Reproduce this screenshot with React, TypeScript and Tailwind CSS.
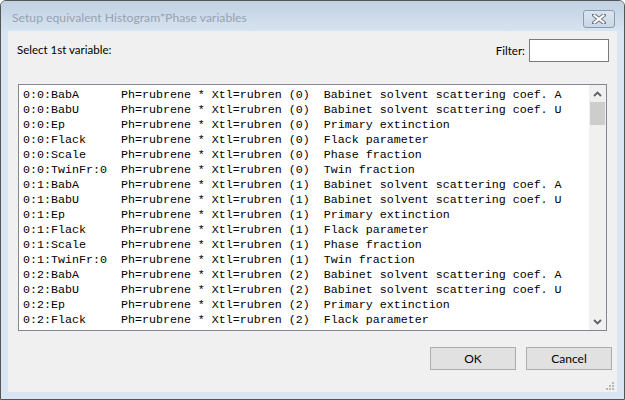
const phases = ['0', '1', '2'];

const params: [string, string][] = [
  ['BabA', 'Babinet solvent scattering coef. A'],
  ['BabU', 'Babinet solvent scattering coef. U'],
  ['Ep', 'Primary extinction'],
  ['Flack', 'Flack parameter'],
  ['Scale', 'Phase fraction'],
  ['TwinFr:0', 'Twin fraction'],
];

const rows = phases
  .flatMap((p) =>
    params.map(([name, desc]) => ({
      name: `0:${p}:${name}`,
      hap: `Ph=rubrene * Xtl=rubren (${p})`,
      desc,
    }))
  )
  .slice(0, 16);

function CloseGlyph() {
  return (
    <svg width="14" height="10" viewBox="0 0 14 10">
      <path d="M2 1 L12 9 M12 1 L2 9" stroke="#6f7784" strokeWidth="4" strokeLinecap="square" />
      <path d="M2.5 1.5 L11.5 8.5 M11.5 1.5 L2.5 8.5" stroke="#ffffff" strokeWidth="2" strokeLinecap="square" />
    </svg>
  );
}

function Chevron({ up }: { up?: boolean }) {
  return (
    <svg width="9" height="6" viewBox="0 0 9 6">
      <path
        d={up ? 'M1 5 L4.5 1.5 L8 5' : 'M1 1 L4.5 4.5 L8 1'}
        fill="none"
        stroke="#606060"
        strokeWidth="1.8"
      />
    </svg>
  );
}

function Grip() {
  const dots = [
    [6, 0],
    [3, 3],
    [6, 3],
    [0, 6],
    [3, 6],
    [6, 6],
  ];
  return (
    <svg width="8" height="8" viewBox="0 0 8 8">
      {dots.map(([x, y]) => (
        <rect key={`${x}-${y}`} x={x} y={y} width="2" height="2" fill="#b8b8b8" />
      ))}
    </svg>
  );
}

export default function App() {
  return (
    <div className="w-[625px] h-[400px] bg-white">
      <div className="w-[625px] h-[400px] flex flex-col border border-[#555555] rounded-t-[6px] bg-[#d9e5f2] overflow-hidden">
        {/* title bar */}
        <div className="h-[30px] shrink-0 flex items-start justify-between pl-[11px] pr-[9px] bg-gradient-to-b from-[#c0d1e3] to-[#d7e4f1]">
          <span className="mt-[11px] text-[12.2px] text-[#98a2ad] font-['Lato',sans-serif] leading-none">
            Setup equivalent Histogram*Phase variables
          </span>
          <div className="w-[32px] h-[18px] mt-[9px] flex items-center justify-center rounded-[3px] border border-[#8d9aae] bg-gradient-to-b from-[#dbe5f0] to-[#c9d7e6]">
            <CloseGlyph />
          </div>
        </div>

        {/* client */}
        <div className="mx-[7px] w-[609px] h-[361px] flex flex-col bg-[#f0f0f0] font-['Lato',sans-serif] text-[11.5px] text-black">
          <div className="flex items-start justify-between pl-[9px] pr-[8px] pt-[8px]">
            <span className="mt-[3px] leading-[16px]">Select 1st variable:</span>
            <div className="flex items-center gap-[4px]">
              <span className="leading-[16px]">Filter:</span>
              <div className="w-[80px] h-[23px] bg-white border border-[#7a7a7a]" />
            </div>
          </div>

          <div className="ml-[10px] mt-[22px] w-[589px] h-[247px] flex border border-[#828790] bg-white">
            <div className="flex-1 pt-[3px] pl-[4px] font-['Liberation_Mono',monospace] text-[11.67px] leading-[15px] whitespace-pre overflow-hidden">
              {rows.map((r) => (
                <div key={r.name} className="h-[15px]">
                  {r.name.padEnd(14) + r.hap + '  ' + r.desc}
                </div>
              ))}
            </div>
            <div className="w-[17px] flex flex-col bg-[#f0f0f0]">
              <div className="h-[17px] flex items-center justify-center">
                <Chevron up />
              </div>
              <div className="mx-[1px] h-[23px] bg-[#cdcdcd]" />
              <div className="flex-1" />
              <div className="h-[17px] flex items-center justify-center">
                <Chevron />
              </div>
            </div>
          </div>

          <div className="flex justify-end gap-[10px] pr-[5px] mt-[16px] text-[12px]">
            <div className="w-[86px] h-[23px] flex items-center justify-center border border-[#adadad] bg-[#e1e1e1]">
              OK
            </div>
            <div className="w-[86px] h-[23px] flex items-center justify-center border border-[#adadad] bg-[#e1e1e1]">
              Cancel
            </div>
          </div>

          <div className="flex-1 flex items-end justify-end pr-[3px] pb-[2px]">
            <Grip />
          </div>
        </div>
        <div className="flex-1" />
      </div>
    </div>
  );
}
